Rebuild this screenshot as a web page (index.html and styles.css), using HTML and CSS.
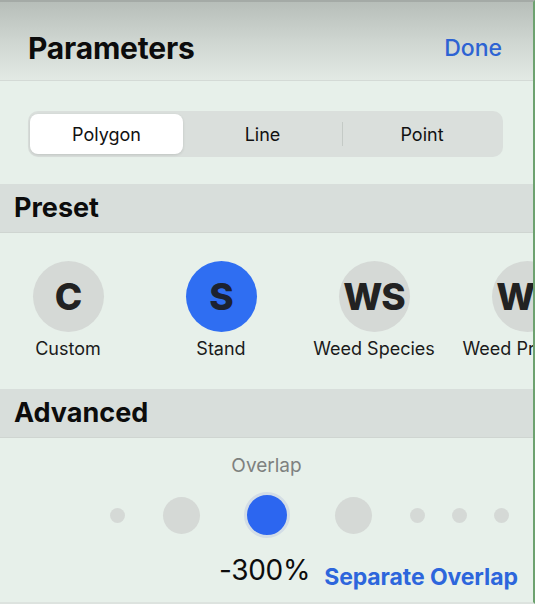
FILE: index.html
```html
<!DOCTYPE html>
<html>
<head>
<meta charset="utf-8">
<link rel="stylesheet" href="styles.css">
</head>
<body>
<div class="screen">
  <header class="nav">
    <h1 class="title">Parameters</h1>
    <span class="done">Done</span>
  </header>
  <div class="seg-wrap">
    <div class="seg">
      <div class="seg-item selected">Polygon</div>
      <div class="seg-item">Line</div>
      <div class="seg-item divided">Point</div>
    </div>
  </div>
  <div class="section-head">Preset</div>
  <div class="presets">
    <div class="preset"><div class="badge">C</div><div class="plabel">Custom</div></div>
    <div class="preset"><div class="badge active">S</div><div class="plabel">Stand</div></div>
    <div class="preset"><div class="badge">WS</div><div class="plabel">Weed Species</div></div>
    <div class="preset"><div class="badge">WP</div><div class="plabel">Weed Pressure</div></div>
  </div>
  <div class="section-head">Advanced</div>
  <div class="overlap-label">Overlap</div>
  <div class="dots">
    <div class="cell small"><span class="dot s"></span></div>
    <div class="cell large"><span class="dot l"></span></div>
    <div class="cell large"><span class="dot b"></span></div>
    <div class="cell large"><span class="dot l"></span></div>
    <div class="cell small"><span class="dot s"></span></div>
    <div class="cell small"><span class="dot s"></span></div>
    <div class="cell small"><span class="dot s"></span></div>
  </div>
  <div class="value-row">
    <span class="value">-300%</span>
    <span class="sep">Separate Overlap</span>
  </div>
</div>
</body>
</html>
```
FILE: styles.css
```css
* { box-sizing: border-box; margin: 0; padding: 0; }
html, body { width: 535px; height: 604px; overflow: hidden; }
body { font-family: Inter, "Noto Sans", "Liberation Sans", sans-serif; background: #e7f0ea; }
.screen {
  width: 535px; height: 604px; overflow: hidden;
  background: #e7f0ea;
  border-top: 2px solid #a4aaa6;
  border-right: 2px solid #6da26f;
  border-bottom: 2px solid #dde3df;
}
.nav {
  height: 79px;
  display: flex; align-items: center; justify-content: space-between;
  padding: 14px 31px 0 28px;
  background: linear-gradient(#b7beb9 0%, #d1d8d3 55%, #e2e9e4 100%);
  border-bottom: 1px solid #d4dad6;
}
.title { font-size: 30px; font-weight: 700; color: #0c0c0c; letter-spacing: -0.2px; }
.done { font-size: 23px; color: #2d63d3; font-weight: 500; }
.seg-wrap { padding: 30px 30px 27px 28px; }
.seg {
  height: 46px; border-radius: 10px; background: #dadfdc;
  display: grid; grid-template-columns: 153px 1fr 1fr; padding: 3px 2px;
}
.seg-item {
  display: flex; align-items: center; justify-content: center;
  font-size: 18px; color: #111; position: relative;
}
.seg-item.selected { background: #fff; border-radius: 8px; box-shadow: 0 1px 3px rgba(0,0,0,0.12); }
.seg-item.divided { border-left: 1px solid #c4cac6; margin: 8px 0; }
.section-head {
  height: 49px; background: #d8dedb;
  display: flex; align-items: center; padding-left: 14px; padding-bottom: 2px;
  font-size: 27px; font-weight: 700; color: #0c0c0c;
  border-bottom: 1px solid #cfd5d1;
}
.presets {
  height: 156px; display: flex; gap: 23px; padding: 28px 0 0 3px;
  overflow: hidden; white-space: nowrap;
}
.preset { flex: 0 0 130px; display: flex; flex-direction: column; align-items: center; }
.badge {
  width: 71px; height: 71px; border-radius: 50%; background: #d5d9d6;
  display: flex; align-items: center; justify-content: center;
  font-size: 37px; font-weight: 800; color: #222; letter-spacing: -1px;
}
.badge.active { background: #2f6ef2; color: #1c2230; }
.plabel { margin-top: 6px; font-size: 18px; line-height: 22px; color: #1a1a1a; }
.overlap-label { text-align: center; font-size: 19px; color: #7e817f; padding-top: 16px; line-height: 24px; }
.dots { display: flex; align-items: center; padding-left: 96px; height: 58px; margin-top: 8px; }
.cell { display: flex; align-items: center; justify-content: center; }
.cell.small { width: 42px; }
.cell.large { width: 86px; }
.dot { display: block; border-radius: 50%; background: #d5d9d6; }
.dot.s { width: 15px; height: 15px; }
.dot.l { width: 37px; height: 37px; }
.dot.b { width: 46px; height: 46px; background: #2c66f0; border: 3px solid #d3dde6; }
.value-row { display: flex; align-items: baseline; padding-left: 219px; gap: 14px; margin-top: 9px; }
.value { font-size: 28px; color: #0c0c0c; letter-spacing: -0.3px; }
.sep { font-size: 23px; font-weight: 700; color: #2d66dc; position: relative; top: 5px; letter-spacing: -0.1px; }
```
